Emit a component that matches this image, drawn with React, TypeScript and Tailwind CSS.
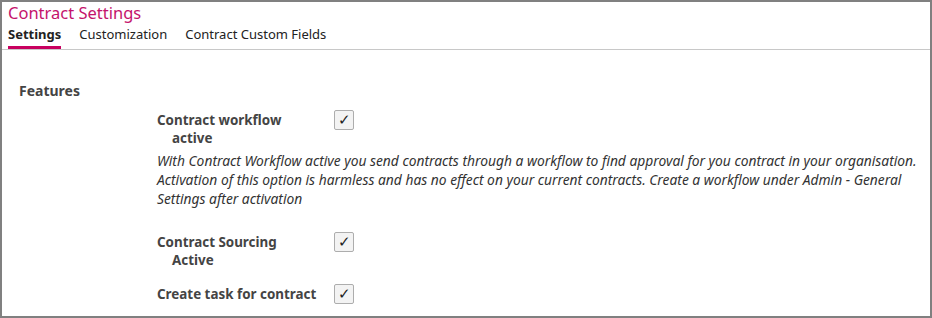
import React from "react"

const font = { fontFamily: '"Noto Sans", "Open Sans", sans-serif' }

function Check() {
  return (
    <div className="flex h-[20px] w-[20px] items-center justify-center rounded-[2px] border border-[#adadad] bg-[#f3f3f3] text-[15px] leading-none text-[#222]">
      ✓
    </div>
  )
}

function Row({ label, indent, top = "" }: { label: string; indent?: string; top?: string }) {
  return (
    <div className={`flex ${top}`}>
      <div className="w-[177px] text-[13.4px] font-bold leading-[18px] text-[#444]">
        <div className="pt-[1px]">{label}</div>
        {indent && <div className="pl-[15px]">{indent}</div>}
      </div>
      <Check />
    </div>
  )
}

export default function App() {
  return (
    <div style={font} className="h-[318px] w-[932px] border-2 border-[#808080] bg-white">
      <div className="px-[6px] pt-[1px] text-[16.5px] leading-[20px] text-[#c4136c]">Contract Settings</div>
      <div className="flex gap-[18px] border-b border-[#c8c8c8] px-[6px] pt-[2px] text-[13px] text-[#222]">
        <div className="border-b-[3px] border-[#c8005f] pb-[1px] font-bold">Settings</div>
        <div className="pb-[4px]">Customization</div>
        <div className="pb-[4px]">Contract Custom Fields</div>
      </div>
      <div className="px-[17px] pt-[30px] text-[14px] font-bold text-[#444]">Features</div>
      <div className="pl-[155px] pt-[9px]">
        <Row label="Contract workflow" indent="active" />
        <p className="mt-[4px] whitespace-nowrap text-[13.8px] italic leading-[19px] text-[#333]">
          With Contract Workflow active you send contracts through a workflow to find approval for you contract in your organisation.
          <br />
          Activation of this option is harmless and has no effect on your current contracts. Create a workflow under Admin - General
          <br />
          Settings after activation
        </p>
        <Row label="Contract Sourcing" indent="Active" top="mt-[24px]" />
        <Row label="Create task for contract" top="mt-[15px]" />
      </div>
    </div>
  )
}
